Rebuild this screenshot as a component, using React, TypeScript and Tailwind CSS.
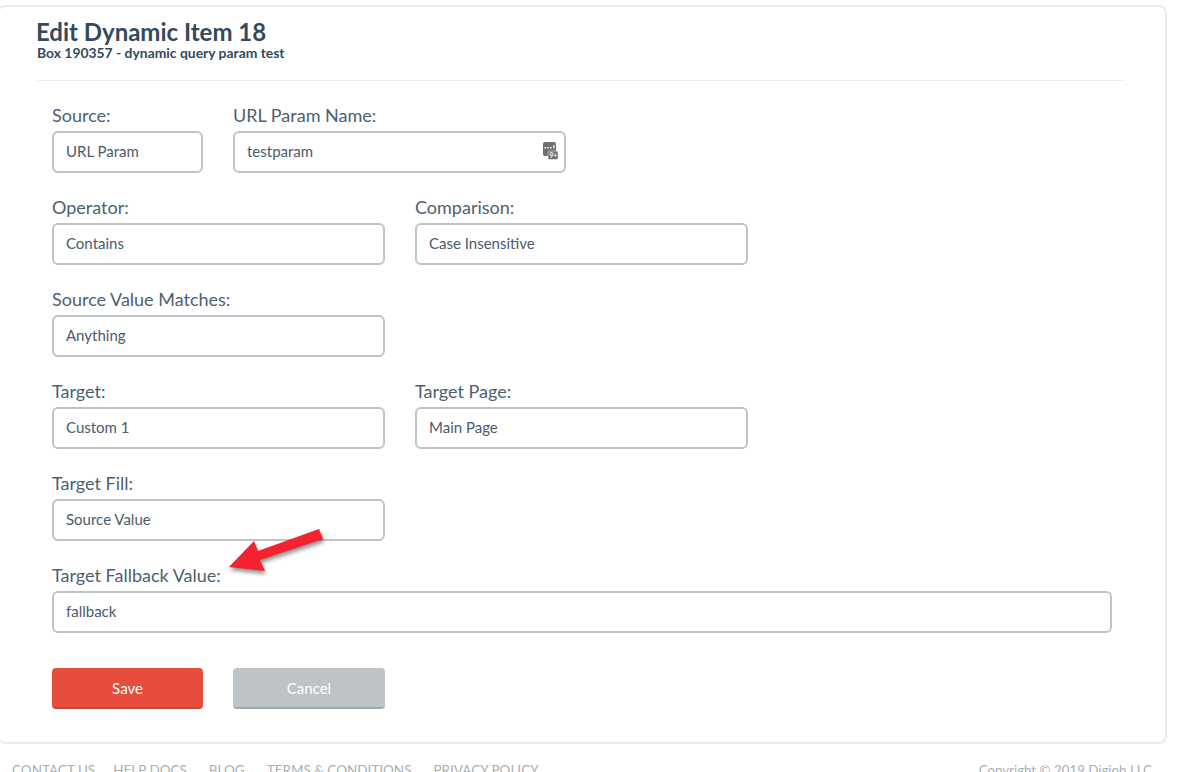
const inputCls =
  "h-[42px] flex items-center border-2 border-[#bdc3c7] rounded-[6px] bg-white pl-[12px] pb-[2px] text-[15px] text-[#4a5b6c]";

function Field({ label, value, width, children }: { label: string; value: string; width: string; children?: React.ReactNode }) {
  return (
    <div className={width}>
      <div className="h-[26px] text-[18px] leading-[20px] text-[#4e5f70]">{label}</div>
      <div className={`${inputCls} relative`}>
        {value}
        {children}
      </div>
    </div>
  );
}

function ParamIcon() {
  return (
    <svg className="absolute right-[6px] top-[9px]" width="16" height="18" viewBox="0 0 16 18">
      <rect x="1" y="0" width="13" height="14" rx="2" fill="#6f6f6f" />
      <rect x="6" y="9" width="10" height="8.5" rx="1.5" fill="#6f6f6f" stroke="#fff" strokeWidth="0.5" />
      <rect x="2.5" y="5" width="1.5" height="1.5" fill="#fff" />
      <rect x="5.3" y="5" width="1.5" height="1.5" fill="#fff" />
      <rect x="8.1" y="5" width="1.5" height="1.5" fill="#fff" />
      <rect x="11.3" y="3" width="1.2" height="3.5" fill="#fff" />
      <text x="7.5" y="15.5" fontSize="6.5" fontWeight="700" fill="#fff" fontFamily="Lato, sans-serif">9+</text>
    </svg>
  );
}

export default function App() {
  return (
    <div className="relative h-[772px] w-[1184px] overflow-hidden bg-white font-['Lato',sans-serif]">
      <div className="ml-[-3px] mt-[5px] h-[739px] w-[1170px] rounded-[8px] border-2 border-[#e8eaeb] pl-[38px] pt-[11px]">
        <h1 className="ml-[-1px] text-[24px] font-bold leading-[28px] text-[#34495e]">Edit Dynamic Item 18</h1>
        <p className="mt-[-1px] text-[13.9px] font-bold leading-[15px] text-[#34495e]">Box 190357 - dynamic query param test</p>
        <div className="mt-[20px] h-px w-[1089px] bg-[#eeeeee]" />

        <div className="ml-[15px] mt-[24px] flex flex-col gap-[24px]">
          <div className="flex gap-[30px]">
            <Field label="Source:" value="URL Param" width="w-[151px]" />
            <Field label="URL Param Name:" value="testparam" width="w-[333px]">
              <ParamIcon />
            </Field>
          </div>
          <div className="flex gap-[30px]">
            <Field label="Operator:" value="Contains" width="w-[333px]" />
            <Field label="Comparison:" value="Case Insensitive" width="w-[333px]" />
          </div>
          <Field label="Source Value Matches:" value="Anything" width="w-[333px]" />
          <div className="flex gap-[30px]">
            <Field label="Target:" value="Custom 1" width="w-[333px]" />
            <Field label="Target Page:" value="Main Page" width="w-[333px]" />
          </div>
          <Field label="Target Fill:" value="Source Value" width="w-[333px]" />
          <Field label="Target Fallback Value:" value="fallback" width="w-[1060px]" />
          <div className="mt-[11px] flex gap-[30px]">
            <button className="h-[41px] w-[151px] rounded-[4px] border-b-2 border-[#c9493a] bg-[#e74c3c] pt-[2px] text-[15px] text-white">
              Save
            </button>
            <button className="h-[41px] w-[152px] rounded-[4px] border-b-2 border-[#a4a9ac] bg-[#bdc3c7] pt-[2px] text-[15px] text-white">
              Cancel
            </button>
          </div>
        </div>
      </div>

      <div className="mt-[18px] flex justify-between pl-[12px] pr-[32px] text-[13.3px] leading-[16px] text-[#a9afb3]">
        <div className="flex gap-[22px] text-[13.5px] uppercase">
          <span className="mr-[-4px]">Contact Us</span>
          <span>Help Docs</span>
          <span>Blog</span>
          <span>Terms &amp; Conditions</span>
          <span>Privacy Policy</span>
        </div>
        <span>Copyright © 2019 Digioh LLC</span>
      </div>

      <svg className="absolute left-[225px] top-[525px] drop-shadow-[1px_3px_2px_rgba(0,0,0,0.45)]" width="102" height="50" viewBox="225 525 102 50">
        <polygon points="319,529 323,539 260,560 265,571 229,567 254,541 258,551" fill="#f4212e" />
      </svg>
    </div>
  );
}
